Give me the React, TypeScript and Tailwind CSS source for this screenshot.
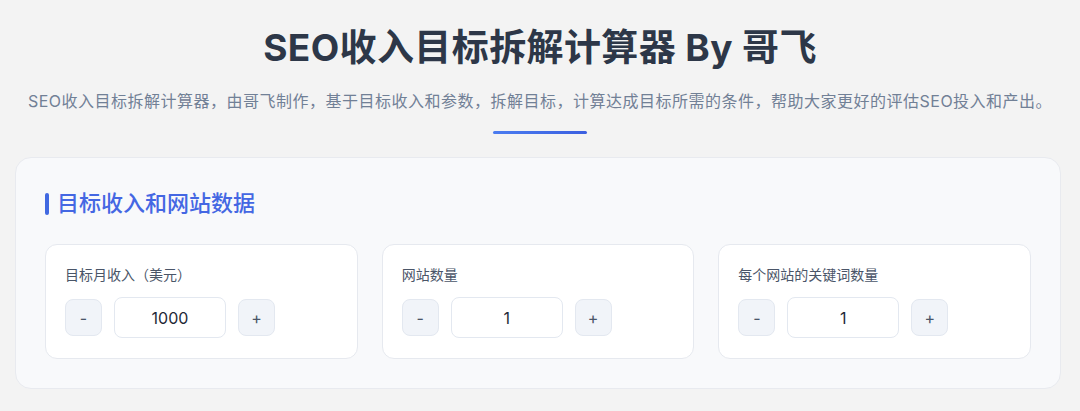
import React, { useState } from "react";

const font = { fontFamily: '"Inter", "Noto Sans CJK SC", sans-serif' };

function Stepper({ label, initial }: { label: string; initial: number }) {
  const [v, setV] = useState(initial);
  return (
    <div className="bg-white border border-[#e6e9ef] rounded-[12px] px-[19px] pt-[20px] pb-[20px]">
      <div className="text-[14px] leading-[20px] text-[#4a5568] mb-[12px]">{label}</div>
      <div className="flex items-center gap-[12px]">
        <button
          onClick={() => setV(v - 1)}
          className="w-[37px] h-[37px] rounded-[8px] bg-[#f1f4f9] border border-[#e3e8f0] text-[#4a5568] text-[16px] flex items-center justify-center"
        >
          -
        </button>
        <input
          value={v}
          onChange={(e) => setV(Number(e.target.value) || 0)}
          className="w-[112px] h-[41px] rounded-[8px] bg-white border border-[#e3e8f0] text-center text-[16px] text-[#1f2937] outline-none"
          style={font}
        />
        <button
          onClick={() => setV(v + 1)}
          className="w-[37px] h-[37px] rounded-[8px] bg-[#f1f4f9] border border-[#e3e8f0] text-[#4a5568] text-[16px] flex items-center justify-center"
        >
          +
        </button>
      </div>
    </div>
  );
}

export default function App() {
  return (
    <div className="min-h-screen bg-[#f3f3f3] pt-[26px]" style={font}>
      <h1 className="text-center text-[37px] leading-[44px] tracking-[0.4px] font-bold text-[#2d3748]">
        SEO收入目标拆解计算器 By 哥飞
      </h1>
      <p className="mt-[19px] text-center text-[16px] leading-[24px] tracking-[0.5px] text-[#718096]">
        SEO收入目标拆解计算器，由哥飞制作，基于目标收入和参数，拆解目标，计算达成目标所需的条件，帮助大家更好的评估SEO投入和产出。
      </p>
      <div className="mx-auto mt-[18px] w-[94px] h-[3px] rounded-full bg-gradient-to-r from-[#4b7cf0] to-[#3b5fe0]" />
      <div className="mt-[23px] ml-[15px] w-[1046px] bg-[#f8f9fb] border border-[#e8eaef] rounded-[16px] px-[29px] pt-[29px] pb-[29px]">
        <div className="flex items-center mb-[24px]">
          <div className="w-[4px] h-[22px] rounded-full bg-[#4169e1] mr-[8px]" />
          <h2 className="text-[22px] leading-[33px] font-medium text-[#4467e3]">目标收入和网站数据</h2>
        </div>
        <div className="grid grid-cols-3 gap-[24px]">
          <Stepper label="目标月收入（美元）" initial={1000} />
          <Stepper label="网站数量" initial={1} />
          <Stepper label="每个网站的关键词数量" initial={1} />
        </div>
      </div>
    </div>
  );
}
